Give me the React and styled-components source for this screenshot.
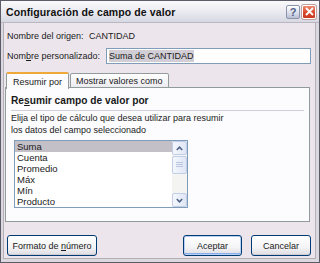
import React from "react";
import styled, { createGlobalStyle } from "styled-components";

const Global = createGlobalStyle`
  html, body { margin: 0; padding: 0; background: #ffffff; }
  body { font-family: "Liberation Sans", Arial, sans-serif; font-size: 9px; color: #1a1a1a; }
  * { box-sizing: border-box; }
`;

const Window = styled.div`
  width: 320px;
  height: 263px;
  border: 1px solid #5c5c68;
  background: #dcd8e0;
  display: flex;
  flex-direction: column;
`;

const TitleBar = styled.div`
  height: 22px;
  flex: none;
  display: flex;
  align-items: center;
  padding: 0 3px 0 5px;
  background: linear-gradient(#fafafc 0%, #ececf2 45%, #d8d8e2 100%);
  border-bottom: 1px solid #b8b6c0;
`;

const Title = styled.div`
  flex: 1;
  font-weight: bold;
  font-size: 10.5px;
  color: #111;
  letter-spacing: 0.1px;
`;

const CapButton = styled.div`
  width: 14px;
  height: 14px;
  margin-left: 2px;
  border-radius: 2px;
  display: flex;
  align-items: center;
  justify-content: center;
  border: 1px solid ${(p) => (p.$close ? "#ffffff" : "#8c94ac")};
  background: ${(p) =>
    p.$close
      ? "linear-gradient(#ee8a70, #d8482c 55%, #c83a20)"
      : "linear-gradient(#ffffff, #d8dcea 60%, #b8bed4)"};
  box-shadow: ${(p) => (p.$close ? "0 0 0 1px #c0a0a0" : "none")};
  font-size: 11px;
  font-weight: bold;
  color: #506088;
`;

const Body = styled.div`
  flex: 1;
  display: flex;
  flex-direction: column;
  background: #ece5ec;
  margin: 0 3px 3px 2px;
  border-left: 1px solid #b4b0b8;
  border-right: 1px solid #b4b0b8;
  border-bottom: 1px solid #b4b0b8;
  padding: 6px 4px 0 1px;
`;

const Row = styled.div`
  display: flex;
  align-items: center;
  height: ${(p) => p.$h || 13}px;
  margin-top: ${(p) => p.$mt || 0}px;
  padding-left: 2px;
`;

const Label = styled.span`
  width: ${(p) => p.$w}px;
  flex: none;
`;

const Input = styled.div`
  flex: 1;
  height: 16px;
  border: 1px solid #7f9db9;
  background: #fff;
  display: flex;
  align-items: center;
  padding-left: 2px;
`;

const Sel = styled.span`
  background: #d2ced6;
  padding: 1px 0;
`;

const U = styled.span`
  text-decoration: underline;
`;

const Tabs = styled.div`
  display: flex;
  align-items: flex-end;
  margin-top: 8px;
  height: 16px;
  padding-left: 1px;
  position: relative;
  z-index: 1;
`;

const Tab = styled.div`
  height: ${(p) => (p.$active ? 17 : 15)}px;
  padding: 0 ${(p) => (p.$active ? 6 : 5)}px;
  display: flex;
  align-items: center;
  border: 1px solid #919b9c;
  border-bottom: ${(p) => (p.$active ? "none" : "1px solid #919b9c")};
  border-top: ${(p) => (p.$active ? "2px solid #f0a838" : "1px solid #919b9c")};
  border-radius: 2px 2px 0 0;
  background: ${(p) => (p.$active ? "#fcfcfe" : "linear-gradient(#ffffff, #ecebf0)")};
  margin-left: ${(p) => (p.$active ? 0 : 1)}px;
  margin-bottom: ${(p) => (p.$active ? -1 : 0)}px;
`;

const Panel = styled.div`
  height: 135px;
  margin-top: -1px;
  margin-right: 1px;
  border: 1px solid #919b9c;
  background: #fcfcfe;
  padding: 6px 5px 0 5px;
  display: flex;
  flex-direction: column;
`;

const Heading = styled.div`
  font-weight: bold;
  font-size: 10.2px;
  height: 13px;
  line-height: 13px;
`;

const Sep = styled.div`
  height: 1px;
  background: #d0d0d8;
  margin: 3px 0 1px 0;
`;

const Desc = styled.div`
  line-height: 12px;
  color: #222;
`;

const ListBox = styled.div`
  margin: 4px 0 0 3px;
  width: 174px;
  height: 68px;
  border: 1px solid #7f9db9;
  background: #fff;
  display: flex;
`;

const Items = styled.div`
  flex: 1;
  display: flex;
  flex-direction: column;
`;

const Item = styled.div`
  height: 11px;
  line-height: 11px;
  padding-left: 2px;
  font-size: 9.5px;
  background: ${(p) => (p.$sel ? "#c4c0c8" : "transparent")};
`;

const Scroll = styled.div`
  width: 15px;
  flex: none;
  display: flex;
  flex-direction: column;
  background: #f4f4f2;
`;

const SBtn = styled.div`
  height: ${(p) => p.$h || 14}px;
  margin-top: ${(p) => p.$mt || 0}px;
  border: 1px solid #c2cde6;
  border-radius: 2px;
  background: linear-gradient(90deg, #f4f7fd, #dfe6f5);
  display: flex;
  align-items: center;
  justify-content: center;
`;

const Footer = styled.div`
  display: flex;
  align-items: center;
  margin-top: 13px;
  padding: 0 0 0 2px;
  gap: 9px;
`;

const Spacer = styled.div`
  flex: 1;
`;

const Button = styled.div`
  width: ${(p) => p.$w}px;
  height: 21px;
  border: 1px solid #003c74;
  border-radius: 3px;
  display: flex;
  align-items: center;
  justify-content: center;
  background: linear-gradient(#ffffff, #f4f4f6 60%, #dcdce2);
  box-shadow: ${(p) =>
    p.$default ? "inset 0 0 0 1px #b8d0f4, inset 0 -1px 0 1px #89adea" : "inset 0 -1px 0 #d0ccd4"};
  color: #1a1a1a;
`;

const Arrow = ({ up }) => (
  <svg width="7" height="5" viewBox="0 0 7 5">
    <path
      d={up ? "M0.8 4 L3.5 1.2 L6.2 4" : "M0.8 1 L3.5 3.8 L6.2 1"}
      fill="none"
      stroke="#4d6185"
      strokeWidth="1.5"
    />
  </svg>
);

const Grip = () => (
  <svg width="7" height="6" viewBox="0 0 7 6">
    <path d="M0 0.5H7M0 2.5H7M0 4.5H7" stroke="#b8c4e0" strokeWidth="1" />
  </svg>
);

export default function App() {
  return (
    <>
      <Global />
      <Window>
        <TitleBar>
          <Title>Configuración de campo de valor</Title>
          <CapButton>?</CapButton>
          <CapButton $close>
            <svg width="9" height="9" viewBox="0 0 9 9">
              <path d="M1 1L8 8M8 1L1 8" stroke="#fff" strokeWidth="1.8" />
            </svg>
          </CapButton>
        </TitleBar>
        <Body>
          <Row>
            <Label $w={82}>Nombre del origen:</Label>
            <span>CANTIDAD</span>
          </Row>
          <Row $h={16} $mt={6}>
            <Label $w={99}>
              Nom<U>b</U>re personalizado:
            </Label>
            <Input>
              <Sel>Suma de CANTIDAD</Sel>
            </Input>
          </Row>
          <Tabs>
            <Tab $active>Resumir por</Tab>
            <Tab>Mostrar valores como</Tab>
          </Tabs>
          <Panel>
            <Heading>
              Re<U>s</U>umir campo de valor por
            </Heading>
            <Sep />
            <Desc>Elija el tipo de cálculo que desea utilizar para resumir</Desc>
            <Desc>los datos del campo seleccionado</Desc>
            <ListBox>
              <Items>
                <Item $sel>Suma</Item>
                <Item>Cuenta</Item>
                <Item>Promedio</Item>
                <Item>Máx</Item>
                <Item>Mín</Item>
                <Item>Producto</Item>
              </Items>
              <Scroll>
                <SBtn>
                  <Arrow up />
                </SBtn>
                <SBtn $h={18} $mt={1}>
                  <Grip />
                </SBtn>
                <Spacer />
                <SBtn>
                  <Arrow />
                </SBtn>
              </Scroll>
            </ListBox>
          </Panel>
          <Footer>
            <Button $w={90}>
              <span>
                Formato de <U>n</U>úmero
              </span>
            </Button>
            <Spacer />
            <Button $w={59} $default>
              Aceptar
            </Button>
            <Button $w={60}>Cancelar</Button>
          </Footer>
        </Body>
      </Window>
    </>
  );
}
